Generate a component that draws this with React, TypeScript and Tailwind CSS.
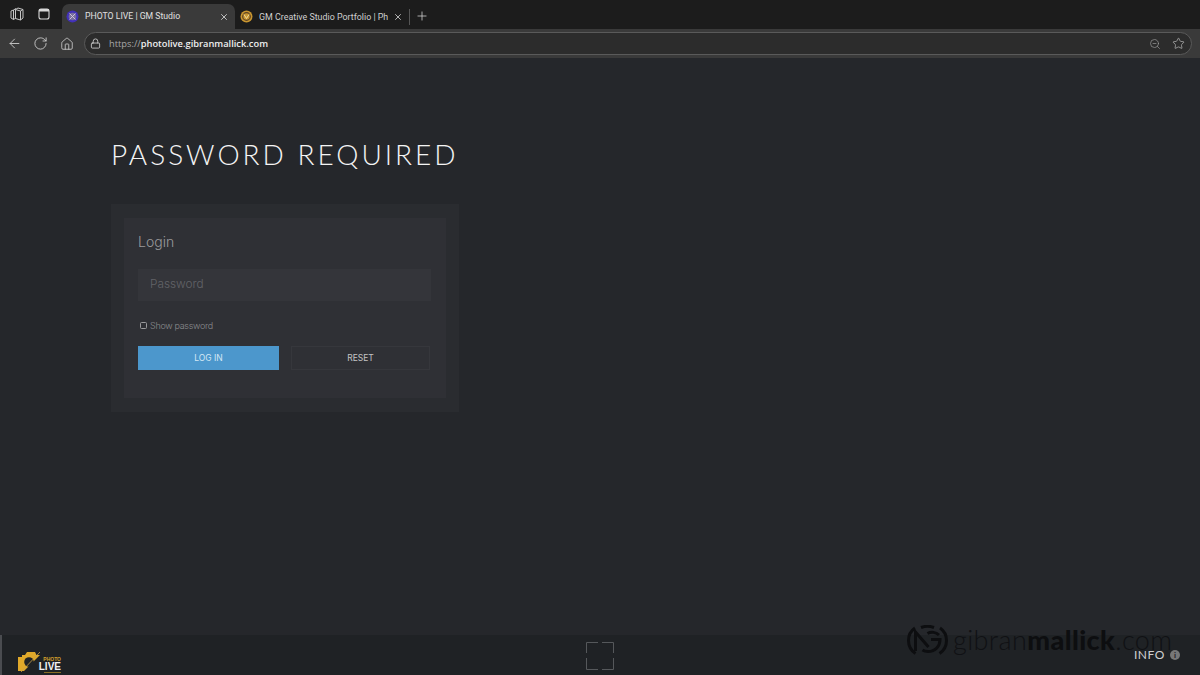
import React from "react";
import { ArrowLeft, RotateCw, Home, Lock, ZoomOut, Star, X, Plus } from "lucide-react";

const Workspaces = () => (
  <svg width="14" height="14" viewBox="0 0 14 14" fill="none" stroke="#c4c4c4" strokeWidth="1">
    <path d="M1 4v7l2.500 1.500V3z" />
    <path d="M3.500 3 6 1.500 M3.500 12.500 6 11" />
    <path d="M5.500 2.500 8 1l5 1.500V11l-2.500 2-5-1.500z" />
    <path d="M5.500 2.500 10.500 4v9M10.500 4 13 2.500" />
  </svg>
);

const TabIcon = () => (
  <svg width="12" height="12" viewBox="0 0 12 12" fill="none">
    <rect x="1" y="1" width="10" height="10" rx="2" stroke="#d8d8d8" strokeWidth="1.100" />
    <rect x="1" y="1" width="10" height="2.500" fill="#d8d8d8" />
  </svg>
);

const PhotoFav = () => (
  <svg width="13" height="13" viewBox="0 0 13 13">
    <circle cx="6.500" cy="6.500" r="6" fill="#4231b8" />
    <circle cx="6.500" cy="6.500" r="3.800" fill="#77709f" />
    <path d="M3.500 3.500l6 6M9.500 3.500l-6 6" stroke="#d8c9e0" strokeWidth="0.900" />
  </svg>
);

const GmFav = () => (
  <svg width="13" height="13" viewBox="0 0 13 13">
    <circle cx="6.500" cy="6.500" r="6" fill="#c9962f" />
    <circle cx="6.500" cy="6.500" r="3.800" fill="none" stroke="#5b4326" strokeWidth="1.200" />
    <path d="M4 4.500l2.500 4 2.500-4" fill="none" stroke="#f0dca0" strokeWidth="1" />
  </svg>
);

const Corners = () => (
  <svg width="28" height="28" viewBox="0 0 28 28" fill="none" stroke="#55585b" strokeWidth="1">
    <path d="M.5 11V.500H12M16 .500h11.500V11M27.500 16v11.500H16M12 27.500H.5V16" />
  </svg>
);

const GmMark = () => (
  <svg width="41" height="31" viewBox="0 0 41 31" fill="none" stroke="#0d0e10" strokeWidth="3">
    <path d="M8 3C3.500 6 1.500 10.500 1.500 15.500c0 5.500 2.500 10 7 13" />
    <path d="M33 3c4.500 3 6.500 7.500 6.500 12.500 0 5.500-2.500 10-7 13" />
    <path d="M14 2.500c4-1.500 9-1.500 13 0" />
    <path d="M8.500 26V7l13 15" />
    <path d="M32 10c-3-3-8-3.500-11.500-1.500M24 14.500h9c0 6.500-4.500 12-12 12-2 0-4-.5-5.500-1.500" />
  </svg>
);

const PhotoLogo = () => (
  <div className="flex h-[22px] items-start">
    <svg width="26" height="20" viewBox="0 0 26 20" fill="none" className="shrink-0">
      <path d="M0 5h4V3h3l2-3h8l1.500 3H22L6 19H0z" fill="#e0a92a" />
      <circle cx="11" cy="10" r="4.800" fill="#1f2225" />
      <path d="M3 20 22 0" stroke="#c9a24a" strokeWidth="0.800" />
    </svg>
    <div className="mt-[4px] flex w-[17px] flex-col items-end font-['Liberation_Sans',sans-serif] font-bold">
      <span className="text-[5px] leading-[6px] text-[#d4a02c]">PHOTO</span>
      <span className="text-[10px] leading-[9px] text-[#f2f2f2]">LIVE</span>
      <span className="mt-[1px] h-px w-full bg-[#8a6d24]" />
    </div>
  </div>
);

export default function App() {
  return (
    <div className="relative flex h-[675px] w-[1200px] flex-col overflow-hidden bg-[#25272b] font-['Liberation_Sans',sans-serif]">
      {/* tab strip */}
      <div className="flex h-[29px] items-end bg-[#1c1c1c] pl-[10px]">
        <div className="flex h-[29px] items-center gap-[14px] pb-[1px]">
          <Workspaces />
          <TabIcon />
        </div>
        <div className="ml-[12px] flex h-[25px] w-[173px] items-center rounded-t-[7px] bg-[#3a3a3a] pl-[4px] pr-[6px]">
          <PhotoFav />
          <span className="ml-[6px] flex-1 whitespace-nowrap font-['Roboto',sans-serif] text-[8.700px] text-[#e0e0e0]">PHOTO LIVE | GM Studio</span>
          <X size={10} strokeWidth={2} className="text-[#d8d8d8]" />
        </div>
        <div className="flex h-[25px] w-[174px] items-center pl-[5px] pr-[6px]">
          <GmFav />
          <span className="ml-[6px] h-[14px] w-[129px] overflow-hidden whitespace-nowrap font-['Roboto',sans-serif] text-[8.900px] leading-[14px] text-[#cfcfcf]">GM Creative Studio Portfolio | Photo</span>
          <X size={10} strokeWidth={2} className="ml-auto text-[#d0d0d0]" />
        </div>
        <div className="mb-[4px] h-[16px] w-px bg-[#555555]" />
        <Plus size={14} strokeWidth={1.300} className="mb-[6px] ml-[5px] text-[#d8d8d8]" />
      </div>

      {/* toolbar */}
      <div className="flex h-[29px] items-center bg-[#3a3a3a] pl-[7px] pr-[8px]">
        <ArrowLeft size={15} strokeWidth={1.400} className="text-[#d0d0d0]" />
        <RotateCw size={15} strokeWidth={1.400} className="ml-[11px] text-[#d0d0d0]" />
        <Home size={14} strokeWidth={1.400} className="ml-[12px] text-[#d0d0d0]" />
        <div className="ml-[10px] flex h-[23px] flex-1 items-center rounded-full border border-[#5a5a5a] bg-[#2c2c2c] pl-[5px] pr-[6px]">
          <Lock size={11} strokeWidth={1.800} className="text-[#d4d4d4]" />
          <span className="ml-[8px] whitespace-nowrap font-['Open_Sans',sans-serif] text-[9.300px] font-semibold text-[#f0f0f0]">
            <span className="font-normal text-[#a8a8a8]">https://</span>photolive.gibranmallick.com
          </span>
          <ZoomOut size={12} strokeWidth={1.400} className="ml-auto text-[#9a9a9a]" />
          <Star size={13} strokeWidth={1.400} className="ml-[11px] text-[#b0b0b0]" />
        </div>
      </div>

      {/* page */}
      <main className="flex-1 pl-[111px] pt-[78px]">
        <h1 className="whitespace-nowrap font-['Lato',sans-serif] text-[28px] font-light leading-[36px] tracking-[3px] text-[#f4f4f4]">
          PASSWORD REQUIRED
        </h1>
        <div className="mt-[32px] h-[208px] w-[348px] bg-[#2a2c30] p-[13px] pt-[14px]">
          <div className="h-[180px] w-[322px] bg-[#2f3035] pl-[14px] pt-[15px]">
            <h2 className="font-['Inter',sans-serif] text-[14px] font-light leading-[18px] text-[#9a9a9c]">Login</h2>
            <div className="mt-[18px] flex h-[32px] w-[293px] items-center bg-[#34353a] pl-[12px] font-['Inter',sans-serif] text-[11.800px] font-light text-[#626368]">
              Password
            </div>
            <label className="mt-[18px] flex h-[13px] items-center font-['Inter',sans-serif] text-[9px] font-light tracking-[-0.300px] text-[#8a8b8e]">
              <span className="ml-[2px] mr-[3px] h-[7px] w-[7px] rounded-[1.500px] border border-[#9a9a9c]" />
              Show password
            </label>
            <div className="mt-[14px] flex gap-[12px]">
              <button className="h-[24px] w-[141px] bg-[#4c97cc] font-['Inter',sans-serif] text-[8.500px] text-[#d4e8f5]">LOG IN</button>
              <button className="h-[24px] w-[139px] border border-[#36373c] font-['Inter',sans-serif] text-[8.500px] text-[#c4c4c6]">RESET</button>
            </div>
          </div>
        </div>
      </main>

      {/* footer */}
      <footer className="relative flex h-[40px] items-center justify-between border-l-2 border-l-[#4a4c50] bg-[#1f2225] pl-[16px] pr-[20px]">
        <div className="mt-[15px] w-[44px]">
          <PhotoLogo />
        </div>
        <div className="ml-[4px] mt-[1px]">
          <Corners />
        </div>
        <div className="mt-[-1px] flex w-[46px] items-center justify-between font-['Lato',sans-serif] text-[12px] leading-[14px] tracking-[0.500px] text-[#d0d0d0]">
          <span>INFO</span>
          <span className="flex h-[10px] w-[10px] items-center justify-center rounded-full bg-[#777777] text-[8px] font-bold leading-none tracking-normal text-[#1f2225]">i</span>
        </div>
      </footer>

      {/* watermark */}
      <div className="absolute left-[907px] top-[624px] flex items-center">
        <GmMark />
        <span className="ml-[5px] whitespace-nowrap font-['Lato',sans-serif] text-[27px] font-light leading-[32px] tracking-[0.400px] text-[#101114]">
          gibran<span className="font-black text-[#0d0e10]">mallick</span>.com
        </span>
      </div>
    </div>
  );
}
